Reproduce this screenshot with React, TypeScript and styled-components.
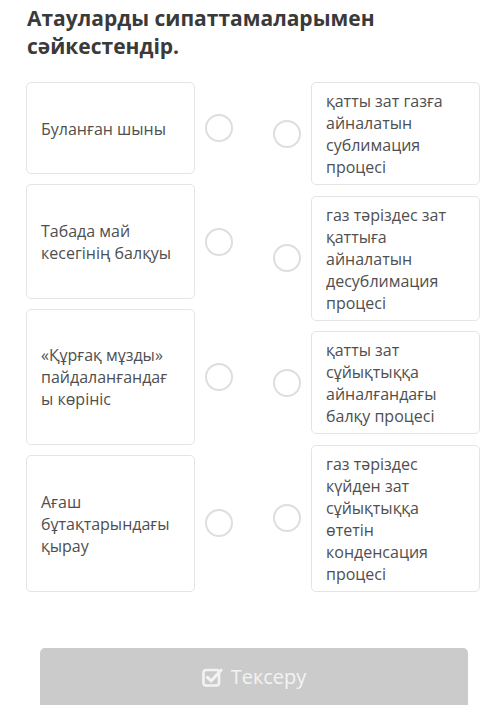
import React from "react";
import styled, { createGlobalStyle } from "styled-components";

const TEXT = "#4f4f4f";
const BORDER = "#e4e4e4";

const GlobalStyle = createGlobalStyle`
  html, body {
    margin: 0;
    padding: 0;
    background: #ffffff;
    font-family: "Open Sans", "Noto Sans", sans-serif;
  }
`;

const Page = styled.main`
  width: 500px;
  height: 705px;
  overflow: hidden;
  box-sizing: border-box;
  padding: 4px 19px 0 26px;
`;

const Title = styled.h1`
  margin: 0 0 22px 1px;
  font-size: 21px;
  line-height: 28px;
  font-weight: 700;
  color: #3a3a3a;
`;

const Board = styled.div`
  display: grid;
  grid-template-columns: 207px 208px;
  justify-content: space-between;
  align-items: stretch;
`;

const Column = styled.div<{ $stretch?: boolean }>`
  display: flex;
  flex-direction: column;
  gap: ${(p) => (p.$stretch ? "10px" : "10.5px")};
`;

const Item = styled.div<{ $stretch?: boolean }>`
  display: flex;
  align-items: center;
  gap: 10px;
  flex: ${(p) => (p.$stretch ? "1 1 auto" : "0 0 auto")};
`;

const Card = styled.div`
  box-sizing: border-box;
  width: 169px;
  align-self: stretch;
  display: flex;
  align-items: center;
  padding: 7px 20px 6px 14px;
  border: 1px solid ${BORDER};
  border-radius: 5px;
  background: #ffffff;
  color: ${TEXT};
  font-size: 16px;
  line-height: 22px;
  overflow-wrap: anywhere;
`;

const Dot = styled.span`
  flex: 0 0 auto;
  box-sizing: border-box;
  width: 28px;
  height: 28px;
  border-radius: 50%;
  border: 2.5px solid #dedede;
  background: #ffffff;
`;

const Footer = styled.div`
  padding: 56px 13px 0 14px;
`;

const CheckButton = styled.button`
  width: 100%;
  height: 62px;
  display: flex;
  align-items: center;
  justify-content: center;
  gap: 8px;
  padding: 0 0 4px;
  border: none;
  border-radius: 5px;
  background: #cbcbcb;
  color: #f3f3f3;
  font-family: "Open Sans", "Noto Sans", sans-serif;
  font-size: 20px;
  cursor: default;
`;

const leftItems = [
  "Буланған шыны",
  "Табада май кесегінің балқуы",
  "«Құрғақ мұзды» пайдаланғандағы көрініс",
  "Ағаш бұтақтарындағы қырау",
];

const rightItems = [
  "қатты зат газға айналатын сублимация процесі",
  "газ тәріздес зат қаттыға айналатын десублимация процесі",
  "қатты зат сұйықтыққа айналғандағы балқу процесі",
  "газ тәріздес күйден зат сұйықтыққа өтетін конденсация процесі",
];

const CheckIcon = () => (
  <svg width="21" height="20" viewBox="0 0 21 20" fill="none">
    <rect x="1.5" y="3" width="15.5" height="15.5" rx="2.5" stroke="currentColor" strokeWidth="2.6" />
    <path d="M5.5 10.4l3.6 3.6L19 3.2" stroke="currentColor" strokeWidth="3" strokeLinecap="round" strokeLinejoin="round" />
  </svg>
);

export default function App() {
  return (
    <>
      <GlobalStyle />
      <Page>
        <Title>Атауларды сипаттамаларымен сәйкестендір.</Title>
        <Board>
          <Column $stretch>
            {leftItems.map((text) => (
              <Item key={text} $stretch>
                <Card>{text}</Card>
                <Dot />
              </Item>
            ))}
          </Column>
          <Column>
            {rightItems.map((text) => (
              <Item key={text}>
                <Dot />
                <Card>{text}</Card>
              </Item>
            ))}
          </Column>
        </Board>
        <Footer>
          <CheckButton>
            <CheckIcon />
            Тексеру
          </CheckButton>
        </Footer>
      </Page>
    </>
  );
}
